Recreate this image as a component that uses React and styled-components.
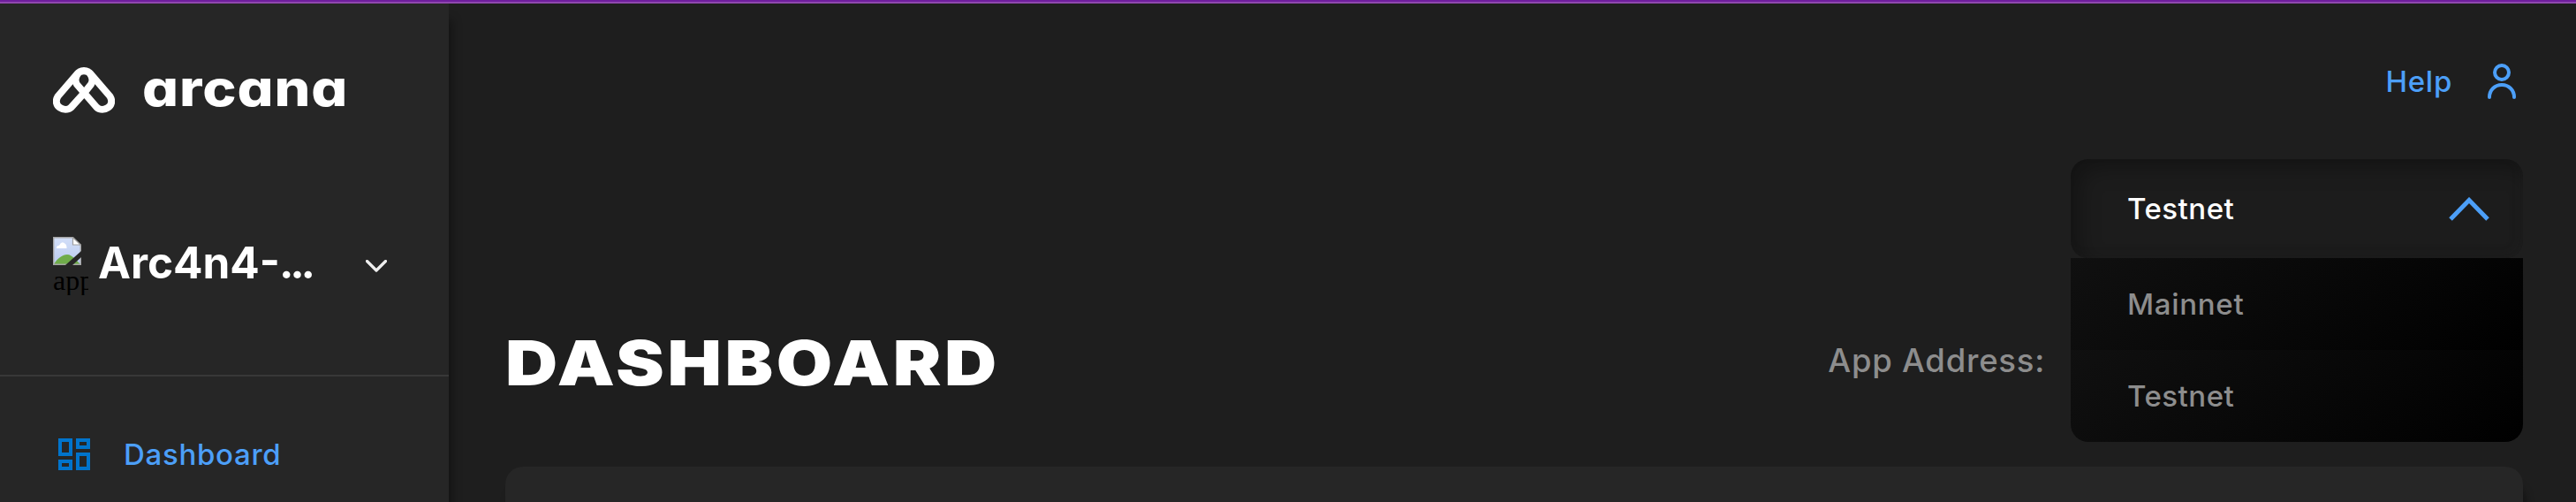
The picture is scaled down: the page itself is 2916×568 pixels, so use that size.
import React from "react";
import styled, { createGlobalStyle } from "styled-components";

const Global = createGlobalStyle`
  * { box-sizing: border-box; }
  body { margin: 0; background: #1e1e1e; font-family: Inter, "Liberation Sans", sans-serif; overflow: hidden; }
`;

const Page = styled.div`
  display: flex;
  flex-direction: column;
  height: 568px;
  overflow: hidden;
  background: #1e1e1e;
`;
const ProgressBar = styled.div`
  flex: none;
  height: 4px;
  background: #6f1d9c;
  border-bottom: 2px solid #8f48ae;
  position: relative;
  z-index: 2;
`;
const Shell = styled.div`
  flex: 1;
  min-height: 0;
  display: flex;
`;
const Sidebar = styled.aside`
  flex: none;
  width: 508px;
  background: #262626;
  box-shadow: 4px 18px 10px rgba(0, 0, 0, 0.35);
`;
const Brand = styled.div`
  display: flex;
  align-items: center;
  height: 196px;
  padding: 0 0 0 60px;
  gap: 31px;
`;
const LogoMark = styled.svg`
  display: block;
  flex: none;
`;
const Label = styled.span`
  display: block;
  white-space: nowrap;
  font-size: ${(p) => p.$size || 33}px;
  line-height: ${(p) => p.$line || 40}px;
  font-weight: ${(p) => p.$weight || 500};
  letter-spacing: ${(p) => p.$track ?? 0.5}px;
  color: ${(p) => p.$color || "#fff"};
`;
const Wordmark = styled(Label)`
  font-feature-settings: "cv11";
  transform: scaleX(1.15);
  transform-origin: left;
  margin-top: -5px;
`;
const AppSwitcher = styled.div`
  display: flex;
  align-items: flex-start;
  height: 226px;
  padding: 68px 70px 0 60px;
  border-bottom: 2px solid #383838;
`;
const AppImage = styled.div`
  width: 40px;
  height: 66px;
  overflow: hidden;
  margin-right: 11px;
  font: 32px/34px "Liberation Serif", serif;
  color: #000;
`;
const AppName = styled(Label)`
  flex: 1;
`;
const Ellipsis = styled.span`
  margin-left: -1px;
  letter-spacing: -4.2px;
`;
const NavItem = styled.a`
  display: flex;
  align-items: center;
  height: 176px;
  padding: 0 0 0 66px;
  gap: 38px;
`;
const Icon = styled.svg`
  display: block;
  flex: none;
  margin-top: ${(p) => p.$top || 0}px;
`;
const Main = styled.main`
  flex: 1;
  display: flex;
  flex-direction: column;
  padding: 0 60px 0 64px;
`;
const TopBar = styled.header`
  flex: none;
  display: flex;
  justify-content: flex-end;
  align-items: center;
  gap: 40px;
  height: 176px;
  padding: 0 8px 0 0;
`;
const HeaderRow = styled.div`
  flex: none;
  display: flex;
  justify-content: space-between;
  height: 348px;
`;
const Heading = styled.h1`
  margin: 189px 0 0 0;
  transform: scaleX(1.17);
  transform-origin: left;
`;
const Tools = styled.div`
  display: flex;
  align-items: flex-start;
  gap: 29px;
`;
const AddressLabel = styled.div`
  padding-top: 206px;
`;
const Select = styled.div`
  width: 512px;
`;
const SelectHead = styled.div`
  display: flex;
  align-items: center;
  justify-content: space-between;
  height: 112px;
  padding: 0 38px 0 64px;
  border-radius: 20px;
  background: #1c1c1c;
  box-shadow: inset 10px 10px 24px rgba(0, 0, 0, 0.3), inset -4px -4px 10px rgba(50, 50, 50, 0.12);
`;
const Option = styled.div`
  display: flex;
  align-items: center;
  height: 104px;
  padding-left: 64px;
  background: linear-gradient(141deg, #101010 0%, #000 100%);
  &:last-child { border-radius: 0 0 20px 20px; }
`;
const Card = styled.section`
  flex: none;
  height: 200px;
  border-radius: 20px;
  background: #262626;
  box-shadow: 4px 20px 10px rgba(0, 0, 0, 0.35);
`;

function BrokenImage() {
  return (
    <Icon width="32" height="32" viewBox="0 0 32 32">
      <defs>
        <linearGradient id="sky" x1="0" y1="0" x2="0" y2="1">
          <stop offset="0" stopColor="#d3dff8" />
          <stop offset="1" stopColor="#b9caf0" />
        </linearGradient>
      </defs>
      <path d="M.7.7H22.5L31.3 9.5V31.3H.7Z" fill="url(#sky)" />
      <path d="M4 13Q3.500 10 7 9.800Q10 4 14 8Q15.500 9 15.500 13Z" fill="#fff" />
      <path d="M1 31C5 24 11 20 16 20C19 20 22 22 25 25L31 31Z" fill="#6fac4a" />
      <path d="M.7.7H22.5L31.3 9.5V31.3H.7Z" fill="none" stroke="#a5a5a5" strokeWidth="1.400" />
      <path d="M22.500.7L31.3 9H22.500Z" fill="#fff" stroke="#a0a0a0" strokeWidth="1.200" />
      <path d="M32 16V23L22 32H14Z" fill="#262626" />
    </Icon>
  );
}

export default function App() {
  return (
    <Page>
      <Global />
      <ProgressBar />
      <Shell>
        <Sidebar>
          <Brand>
            <LogoMark width="70" height="52" viewBox="0 0 70 52" fill="none" stroke="#fff" strokeWidth="8">
              <path d="M35 29.500L20.500 45.500C13 52 -1 44 5.500 33L27 8C31 2.900 39 2.900 43 8L64.500 33C71 44 57 52 49.500 45.500L27 19.500C23 13 28 4 35 4C42 4 47 13 43 19.500L35 29.500" strokeLinejoin="round" />
            </LogoMark>
            <Wordmark $size={56} $weight={770} $track={0.8}>arcana</Wordmark>
          </Brand>
          <AppSwitcher>
            <AppImage><BrokenImage />app</AppImage>
            <AppName $size={49.5} $line={59} $weight={650} $track={0}>Arc4n4-<Ellipsis>...</Ellipsis></AppName>
            <Icon $top={26} width="24" height="14" viewBox="0 0 24 14" fill="none" stroke="#eee" strokeWidth="3.2" strokeLinecap="round" strokeLinejoin="round">
              <path d="M1.500 1.500L12 12L22.500 1.500" />
            </Icon>
          </AppSwitcher>
          <NavItem>
            <Icon width="36" height="36" viewBox="0 0 36 36" fill="none" stroke="#0074cc" strokeWidth="4">
              <path d="M2 2H14V18H2ZM22 2H34V10H22ZM2 26H14V34H2ZM22 18H34V34H22Z" />
            </Icon>
            <Label $track={0.7} $color="#4c9ff8">Dashboard</Label>
          </NavItem>
        </Sidebar>
        <Main>
          <TopBar>
            <Label $track={0.7} $color="#4c9ff8">Help</Label>
            <Icon width="32" height="40" viewBox="0 0 32 40" fill="none" stroke="#4c9ff8" strokeWidth="4" strokeLinecap="round">
              <circle cx="16" cy="10" r="8" />
              <path d="M2 38C2 30 8 24 16 24C24 24 30 30 30 38" />
            </Icon>
          </TopBar>
          <HeaderRow>
            <Heading><Label $size={70} $line={84} $weight={900} $track={3.1}>DASHBOARD</Label></Heading>
            <Tools>
              <AddressLabel><Label $size={36.5} $line={44} $track={0.75} $color="#8d8d8d">App Address:</Label></AddressLabel>
              <Select>
                <SelectHead>
                  <Label>Testnet</Label>
                  <Icon width="46" height="27" viewBox="0 0 46 27" fill="none" stroke="#4c9ff8" strokeWidth="5">
                    <path d="M2 25L23 3.500L44 25" />
                  </Icon>
                </SelectHead>
                <Option><Label $track={0.7} $color="#8d8d8d">Mainnet</Label></Option>
                <Option><Label $color="#8d8d8d">Testnet</Label></Option>
              </Select>
            </Tools>
          </HeaderRow>
          <Card />
        </Main>
      </Shell>
    </Page>
  );
}
